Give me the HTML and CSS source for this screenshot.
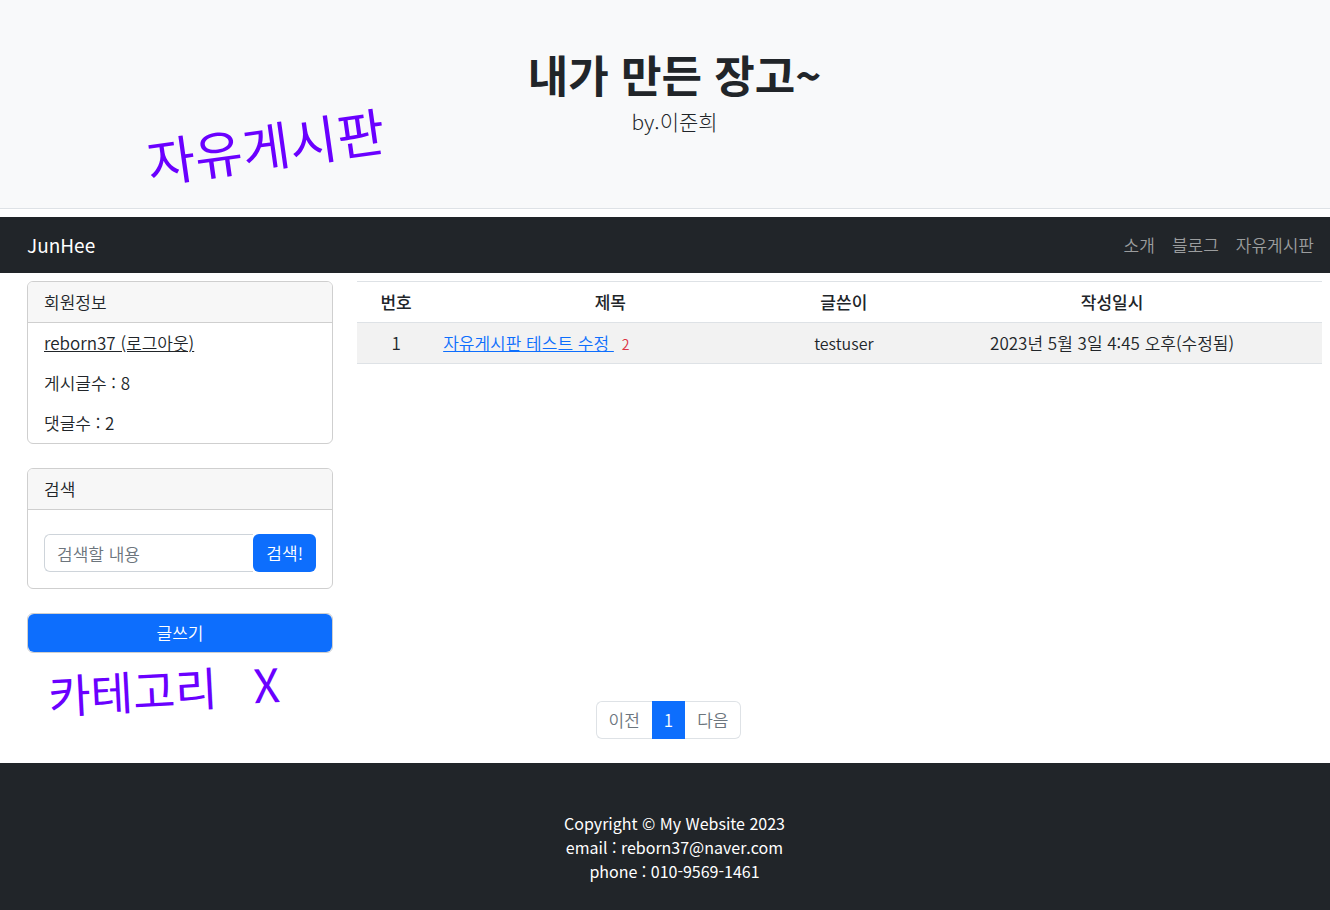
FILE: index.html
```html
<!DOCTYPE html>
<html lang="ko">
<head>
<meta charset="utf-8">
<meta name="viewport" content="width=device-width, initial-scale=1">
<title>자유게시판</title>
<link rel="stylesheet" href="styles.css">
</head>
<body>
<header class="hero">
  <h1 class="hero-title">내가 만든 장고~</h1>
  <p class="hero-lead">by.이준희</p>
  <span class="note note-board">자유게시판</span>
</header>
<nav class="navbar">
  <a class="brand" href="#">JunHee</a>
  <div class="nav-links">
    <a href="#">소개</a>
    <a href="#">블로그</a>
    <a href="#">자유게시판</a>
  </div>
</nav>
<main class="layout">
  <aside class="sidebar">
    <section class="card">
      <h2 class="card-header">회원정보</h2>
      <ul class="info">
        <li><a href="#">reborn37 (로그아웃)</a></li>
        <li>게시글수 : 8</li>
        <li>댓글수 : 2</li>
      </ul>
    </section>
    <section class="card">
      <h2 class="card-header">검색</h2>
      <form class="search">
        <input type="text" placeholder="검색할 내용" aria-label="검색할 내용">
        <button type="button">검색!</button>
      </form>
    </section>
    <div class="card write-card">
      <button class="write" type="button">글쓰기</button>
      <span class="note note-category"><span>카테고리</span><span>X</span></span>
    </div>
  </aside>
  <section class="board">
    <table>
      <thead>
        <tr><th class="col-no">번호</th><th class="col-title">제목</th><th class="col-author">글쓴이</th><th class="col-date">작성일시</th></tr>
      </thead>
      <tbody>
        <tr><td>1</td><td class="title"><a href="#">자유게시판 테스트 수정&nbsp;</a><span class="count">2</span></td><td class="author">testuser</td><td>2023년 5월 3일 4:45 오후(수정됨)</td></tr>
      </tbody>
    </table>
  </section>
</main>
<nav class="pagination" aria-label="페이지">
  <a href="#">이전</a><a class="active" href="#" aria-current="page">1</a><a href="#">다음</a>
</nav>
<footer class="footer">
  <p>Copyright © My Website 2023</p>
  <p>email : reborn37@naver.com</p>
  <p>phone : 010-9569-1461</p>
</footer>
</body>
</html>
```
FILE: styles.css
```css
* { box-sizing: border-box; }
body {
  margin: 0;
  min-height: 100vh;
  display: flex;
  flex-direction: column;
  overflow-x: hidden;
  background: #fff;
  color: #212529;
  font: 350 17px/24px "Noto Sans CJK KR", "Noto Sans", sans-serif;
}
h1, h2, p, ul { margin: 0; padding: 0; }
button, input { font: inherit; }

.hero {
  position: relative;
  padding: 48px 8px 72px 27px;
  margin-bottom: 8px;
  text-align: center;
  background: #f8f9fa;
  border-bottom: 1px solid #dee2e6;
}
.hero-title { font-size: 44px; line-height: 52px; font-weight: 700; }
.hero-lead { margin-top: 6px; font-size: 21px; line-height: 30px; font-weight: 300; }

.note {
  position: absolute;
  color: #6a00ff;
  font-weight: 400;
  white-space: nowrap;
  pointer-events: none;
}
.note-board { left: 146px; top: 115px; font-size: 52px; line-height: 60px; transform: rotate(-8deg); }
.note-category {
  display: flex;
  gap: 36px;
  left: 20px;
  top: 49px;
  font-size: 46px;
  line-height: 50px;
  transform: rotate(-3deg);
}

.navbar {
  display: flex;
  align-items: center;
  justify-content: space-between;
  min-height: 56px;
  padding: 8px 16px 8px 27px;
  background: #212529;
}
.navbar a { text-decoration: none; }
.brand { color: #fff; font-size: 19px; line-height: 30px; font-weight: 400; }
.nav-links { display: flex; gap: 17px; }
.nav-links a { color: #9b9d9e; }

.layout {
  display: grid;
  grid-template-columns: 306fr 965fr;
  gap: 24px;
  padding: 8px 8px 0 27px;
}
.sidebar { display: flex; flex-direction: column; gap: 24px; }
.card { border: 1px solid #cfcfcf; border-radius: 6px; background: #fff; }
.card-header {
  padding: 8px 16px;
  font-size: inherit;
  font-weight: inherit;
  background: #f7f7f7;
  border-bottom: 1px solid #cfcfcf;
  border-radius: 5px 5px 0 0;
}
.info { list-style: none; }
.info li { padding: 8px 16px; }
.info a { color: inherit; }
.search { display: flex; padding: 24px 16px 16px; }
.search input {
  flex: 1;
  min-width: 0;
  height: 38px;
  padding: 6px 12px;
  border: 1px solid #ced4da;
  border-right: 0;
  border-radius: 6px 0 0 6px;
  background: #fff;
}
.search input::placeholder { color: #6c757d; opacity: 1; }
.search button, .write {
  height: 38px;
  border: 0;
  border-radius: 6px;
  background: #0d6efd;
  color: #fff;
}
.search button { padding: 0 13px; }
.write-card { position: relative; }
.write { display: block; width: 100%; }

table { width: 100%; table-layout: fixed; border-collapse: collapse; text-align: center; }
th, td { padding: 8px; border: solid #dee2e6; border-width: 1px 0; }
th { font-weight: 500; }
tbody tr { background: #f2f2f2; }
.col-no { width: 8.1%; }
.col-title { width: 36.3%; }
.col-author { width: 12.1%; }
.col-date { width: 43.5%; }
.title { text-align: left; }
.title a { color: #0d6efd; }
.author { font-size: 16px; }
.count { margin-left: 8px; color: #dc3545; font-size: 14px; line-height: 16px; }

.pagination { display: flex; justify-content: center; margin: 48px 20px 24px 27px; }
.pagination a {
  padding: 6px 12px;
  border: 1px solid #dee2e6;
  color: #6c757d;
  text-decoration: none;
}
.pagination a:first-child { border-right: 0; border-radius: 6px 0 0 6px; }
.pagination a:last-child { border-left: 0; border-radius: 0 6px 6px 0; }
.pagination .active { padding: 6px 11px; background: #0d6efd; border-color: #0d6efd; color: #fff; }

.footer {
  flex: 1;
  padding: 48px 8px 24px 27px;
  text-align: center;
  background: #212529;
  color: #fff;
  font-size: 16px;
  font-weight: 400;
}
```
